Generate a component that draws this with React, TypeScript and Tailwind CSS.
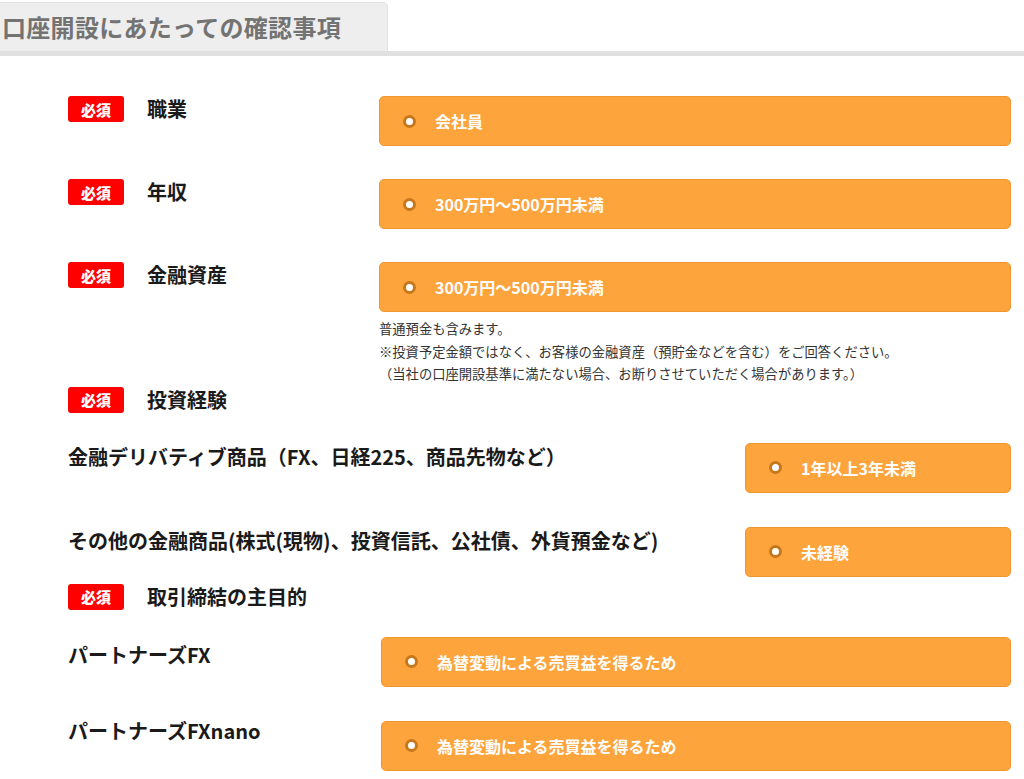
import React from "react";

const font = { fontFamily: '"Noto Sans CJK JP", "Noto Sans", sans-serif' };

function Badge() {
  return (
    <span className="inline-flex items-center justify-center w-[56px] h-[26px] rounded-[3px] bg-[#ff0000] text-white text-[15px] font-black leading-none shrink-0">
      必須
    </span>
  );
}

function OptionBox({ value, className = "" }: { value: string; className?: string }) {
  return (
    <div
      className={`flex items-center h-[50px] rounded-[5px] bg-[#fea43c] border border-[#f09630] pl-[23px] ${className}`}
    >
      <span className="flex items-center justify-center w-[13px] h-[13px] rounded-full bg-[#c7781c] shrink-0">
        <span className="w-[7px] h-[7px] rounded-full bg-white"></span>
      </span>
      <span className="ml-[19px] text-white text-[16px] font-bold">{value}</span>
    </div>
  );
}

function RequiredRow({ label, value, className = "" }: { label: string; value?: string; className?: string }) {
  return (
    <div className={`flex items-start ${className}`}>
      <div className="w-[311px] flex items-center gap-[23px] h-[26px] shrink-0">
        <Badge />
        <span className="text-[20px] font-bold text-[#1a1a1a]">{label}</span>
      </div>
      {value && <OptionBox value={value} className="flex-1" />}
    </div>
  );
}

export default function App() {
  return (
    <div className="bg-white min-h-[779px] w-[1024px] overflow-hidden" style={font}>
      {/* Title tab */}
      <div className="pt-[2px]">
        <div className="w-[388px] h-[49px] bg-[#eeeeee] rounded-tr-[5px] border-r border-t border-[#e2e2e2] flex items-center pl-[2px]">
          <h1 className="text-[24px] font-bold text-[#737373] tracking-[0.3px]">口座開設にあたっての確認事項</h1>
        </div>
        <div className="h-[5px] bg-[#e0e0e0]"></div>
      </div>

      <div className="pl-[68px] pr-[13px] pt-[40px]">
        <RequiredRow label="職業" value="会社員" />
        <RequiredRow label="年収" value="300万円～500万円未満" className="mt-[33px]" />
        <RequiredRow label="金融資産" value="300万円～500万円未満" className="mt-[33px]" />

        <div className="ml-[311px] mt-[6px] text-[13.3px] leading-[22.5px] text-[#333333]">
          <p>普通預金も含みます。</p>
          <p>※投資予定金額ではなく、お客様の金融資産（預貯金などを含む）をご回答ください。</p>
          <p>（当社の口座開設基準に満たない場合、お断りさせていただく場合があります。）</p>
        </div>

        <RequiredRow label="投資経験" className="mt-[1px]" />

        <div className="flex items-start justify-between mt-[30px]">
          <span className="text-[20px] font-bold leading-[28px] text-[#1a1a1a]">
            金融デリバティブ商品（FX、日経225、商品先物など）
          </span>
          <OptionBox value="1年以上3年未満" className="w-[266px]" />
        </div>
        <div className="flex items-start justify-between mt-[34px]">
          <span className="text-[20px] font-bold leading-[28px] text-[#1a1a1a]">
            その他の金融商品(株式(現物)、投資信託、公社債、外貨預金など)
          </span>
          <OptionBox value="未経験" className="w-[266px]" />
        </div>

        <RequiredRow label="取引締結の主目的" className="mt-[7px]" />

        <div className="flex items-start mt-[27px]">
          <span className="w-[313px] shrink-0 text-[20px] font-bold leading-[36px] text-[#1a1a1a]">パートナーズFX</span>
          <OptionBox value="為替変動による売買益を得るため" className="flex-1" />
        </div>
        <div className="flex items-start mt-[34px]">
          <span className="w-[313px] shrink-0 text-[20px] font-bold leading-[20px] text-[#1a1a1a]">パートナーズFXnano</span>
          <OptionBox value="為替変動による売買益を得るため" className="flex-1" />
        </div>
      </div>
    </div>
  );
}
